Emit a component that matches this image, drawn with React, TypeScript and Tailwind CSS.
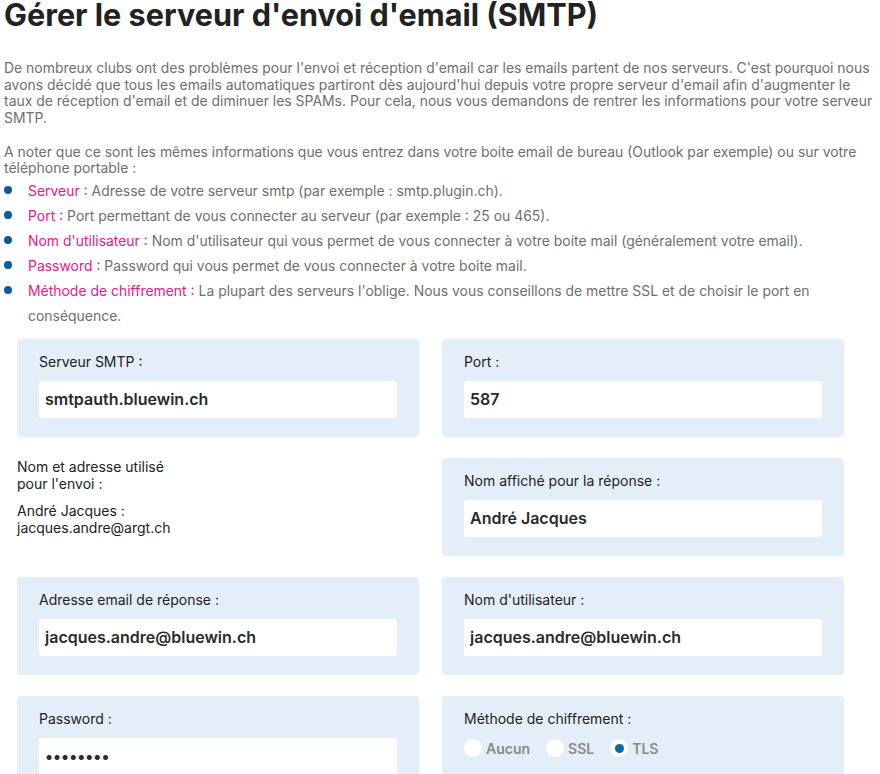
import React from "react";

function Box({ label, value, type = "text" }: { label: string; value: string; type?: string }) {
  return (
    <div className="h-[98px] rounded-[4px] bg-[#e3eef8] px-[22px] pt-[13px]">
      <div className="text-[14px] leading-[20px] text-[#222]">{label}</div>
      <input
        readOnly
        type={type}
        value={value}
        className="mt-[9px] block h-[37px] w-full rounded-[3px] bg-white px-[6px] font-['Inter',sans-serif] text-[16px] font-semibold text-[#2a2a2a] outline-none"
      />
    </div>
  );
}

function Radio({ label, checked }: { label: string; checked?: boolean }) {
  return (
    <div className="flex items-center">
      <span className="flex h-[18px] w-[18px] items-center justify-center rounded-full bg-white">
        {checked && <span className="h-[9px] w-[9px] rounded-full bg-[#0d67ad]" />}
      </span>
      <span className="ml-[4px] text-[14px] font-semibold text-[#8a8a8a]">{label}</span>
    </div>
  );
}

const items: [string, string][] = [
  ["Serveur :", " Adresse de votre serveur smtp (par exemple : smtp.plugin.ch)."],
  ["Port :", " Port permettant de vous connecter au serveur (par exemple : 25 ou 465)."],
  ["Nom d'utilisateur :", " Nom d'utilisateur qui vous permet de vous connecter à votre boite mail (généralement votre email)."],
  ["Password :", " Password qui vous permet de vous connecter à votre boite mail."],
  [
    "Méthode de chiffrement :",
    " La plupart des serveurs l'oblige. Nous vous conseillons de mettre SSL et de choisir le port en conséquence.",
  ],
];

export default function App() {
  return (
    <div className="h-[774px] w-[880px] overflow-hidden bg-white font-['Inter',sans-serif] text-[#222]">
      <h1 className="px-[4px] text-[30.6px] font-bold leading-[30px] text-[#222]">
        Gérer le serveur d'envoi d'email (SMTP)
      </h1>
      <div className="mt-[30px] pl-[4px] pr-[2px] text-[13.95px] leading-[16.7px] text-[#6f6f6f]">
        <p>
          De nombreux clubs ont des problèmes pour l'envoi et réception d'email car les emails partent de nos serveurs.
          C'est pourquoi nous avons décidé que tous les emails automatiques partiront dès aujourd'hui depuis votre propre
          serveur d'email afin d'augmenter le taux de réception d'email et de diminuer les SPAMs. Pour cela, nous vous
          demandons de rentrer les informations pour votre serveur SMTP.
        </p>
        <p className="mt-[16.7px]">
          A noter que ce sont les mêmes informations que vous entrez dans votre boite email de bureau (Outlook par exemple)
          ou sur votre téléphone portable :
        </p>
        <ul className="mt-[1px]">
          {items.map(([k, v]) => (
            <li key={k} className="flex items-start leading-[25px]">
              <span className="mr-[16px] mt-[8.5px] h-[8px] w-[8px] shrink-0 rounded-full bg-[#0b5c9b]" />
              <span>
                <span className="text-[#ec168c]">{k}</span>
                {v}
              </span>
            </li>
          ))}
        </ul>
      </div>
      <div className="ml-[17px] mt-[11px] grid grid-cols-[402px_402px] gap-x-[23px] gap-y-[21px]">
        <Box label="Serveur SMTP :" value="smtpauth.bluewin.ch" />
        <Box label="Port :" value="587" />
        <div className="w-[160px] pt-[1px] text-[14px] leading-[16.7px] text-[#222]">
          <p>Nom et adresse utilisé pour l'envoi :</p>
          <p className="mt-[10.6px]">André Jacques : jacques.andre@argt.ch</p>
        </div>
        <Box label="Nom affiché pour la réponse :" value="André Jacques" />
        <Box label="Adresse email de réponse :" value="jacques.andre@bluewin.ch" />
        <Box label="Nom d'utilisateur :" value="jacques.andre@bluewin.ch" />
        <Box label="Password :" value="azertyui" type="password" />
        <div className="h-[98px] rounded-[4px] bg-[#e3eef8] px-[22px] pt-[13px]">
          <div className="text-[14px] leading-[20px] text-[#222]">Méthode de chiffrement :</div>
          <div className="mt-[9px] flex items-center gap-[16px]">
            <Radio label="Aucun" />
            <Radio label="SSL" />
            <Radio label="TLS" checked />
          </div>
        </div>
      </div>
    </div>
  );
}
